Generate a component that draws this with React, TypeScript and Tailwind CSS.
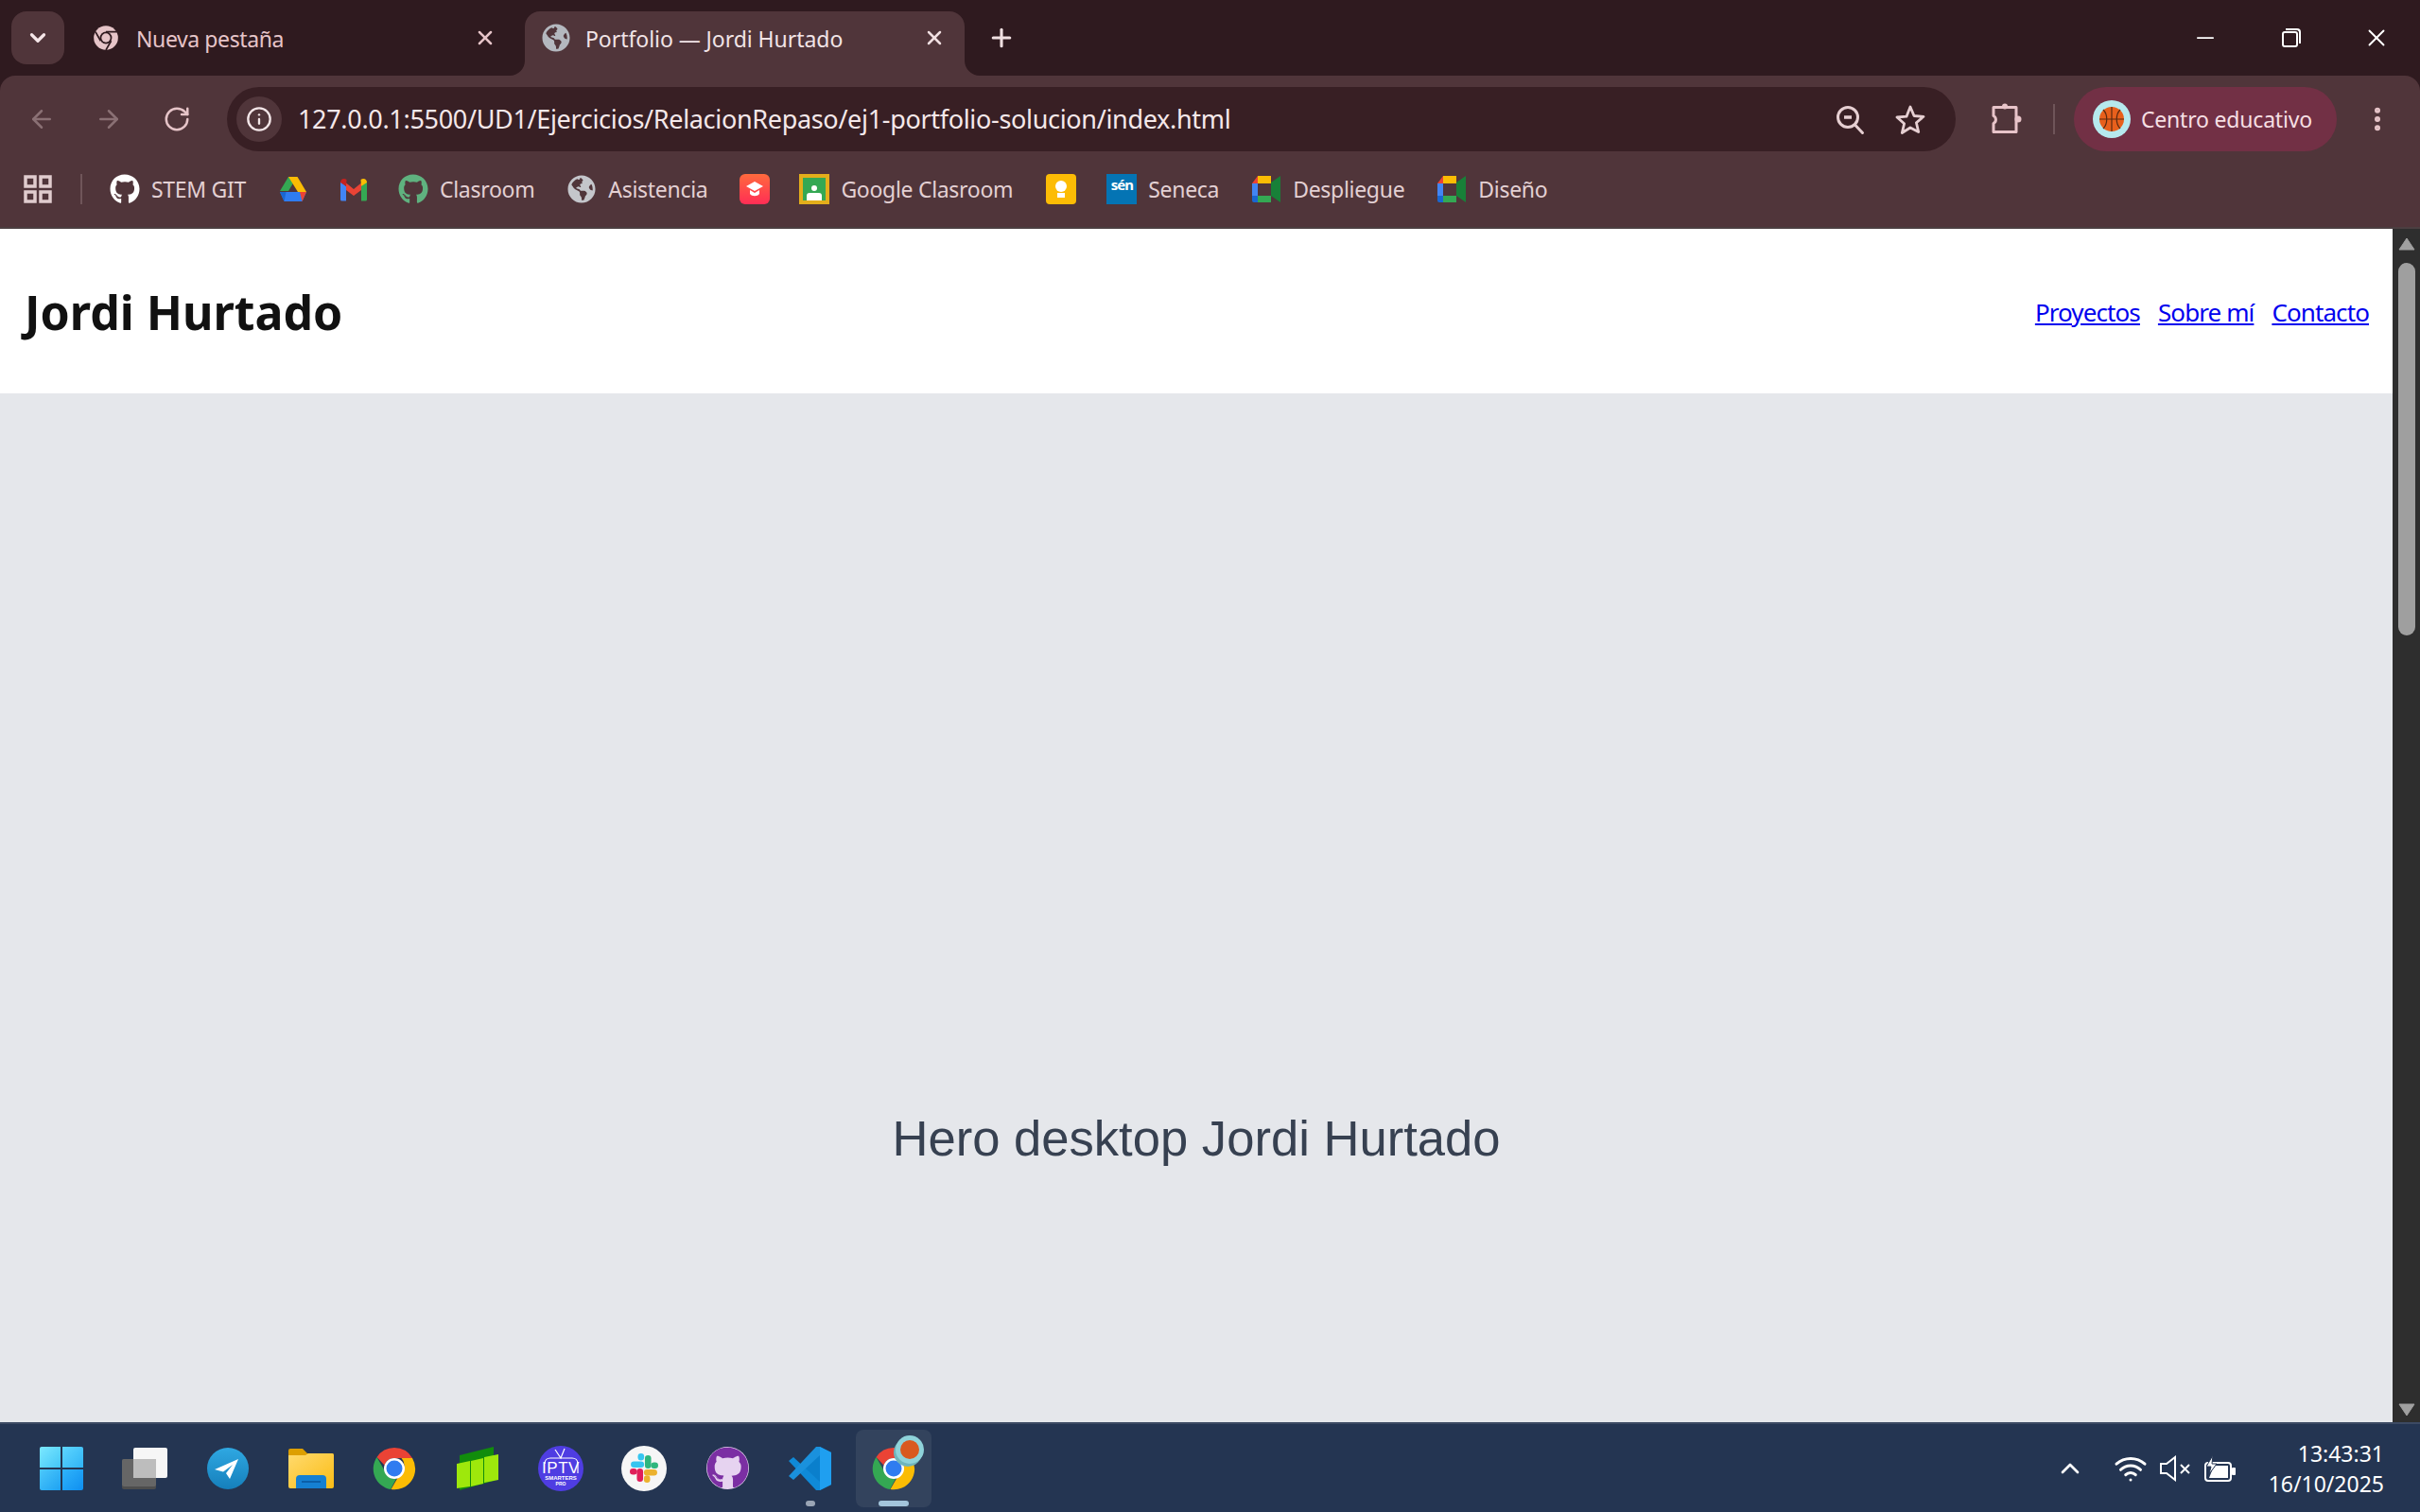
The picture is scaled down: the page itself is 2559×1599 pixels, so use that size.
import React, { type ReactNode } from "react";
import {
  ArrowLeft,
  ArrowRight,
  ChevronDown,
  ChevronUp,
  EllipsisVertical,
  Info,
  Minus,
  Plus,
  RotateCw,
  Wifi,
  X,
} from "lucide-react";
import { FaGithub, FaGlobeAmericas } from "react-icons/fa";

const SEGOE = "font-['Noto_Sans',sans-serif]";

function ChromeMono({ size = 28, color = "#e6c4c8" }: { size?: number; color?: string }) {
  return (
    <svg width={size} height={size} viewBox="0 0 48 48">
      <circle cx="24" cy="24" r="22" fill={color} />
      <circle cx="24" cy="24" r="11" fill="#2f1a1f" />
      <circle cx="24" cy="24" r="8" fill={color} />
      <path d="M24 13h20M14.5 29.5L5 13M33.5 29.5L24 46" stroke="#2f1a1f" strokeWidth="3" />
    </svg>
  );
}

function ChromeColor({ size = 48 }: { size?: number }) {
  return (
    <svg width={size} height={size} viewBox="0 0 48 48">
      <path d="M24 2a22 22 0 0 1 19 11H24a11 11 0 0 0-10.5 7.5L5.5 12A22 22 0 0 1 24 2z" fill="#ea4335" />
      <path d="M5.5 12l9.5 16.500a11 11 0 0 0 11 6.300L20 46A22 22 0 0 1 5.500 12z" fill="#34a853" />
      <path d="M43 13a22 22 0 0 1-22.500 33L30 29.500A11 11 0 0 0 31.500 13z" fill="#fbbc04" />
      <circle cx="24" cy="24" r="11" fill="#fff" />
      <circle cx="24" cy="24" r="8.500" fill="#2f7cf0" />
    </svg>
  );
}

function Drive() {
  return (
    <svg width="30" height="28" viewBox="0 0 30 28">
      <path d="M10 1h9L10 16H1z" fill="#34a853" />
      <path d="M10 1h9.500L29 17h-9z" fill="#fbbc04" />
      <path d="M1 17l4.500 10h19L29 17z" fill="#2f7cf0" />
      <path d="M1 17h6.500l-2 10z" fill="#1967d2" />
      <path d="M22 17h7l-4.500 10z" fill="#ea4335" />
    </svg>
  );
}

function Gmail() {
  return (
    <svg width="30" height="26" viewBox="0 0 30 26">
      <path d="M1 5v19a1.500 1.500 0 0 0 1.500 1.500H7V10z" fill="#4285f4" />
      <path d="M29 5v19a1.500 1.500 0 0 1-1.500 1.500H23V10z" fill="#34a853" />
      <path d="M7 6.500L15 13l8-6.500V14l-8 6-8-6z" fill="#ea4335" />
      <path d="M1 6c0-4 4-5 6.500-3L7 10z" fill="#c5221f" />
      <path d="M29 6c0-4-4-5-6.500-3L23 10z" fill="#fbbc04" />
    </svg>
  );
}

function ClassroomRed() {
  return (
    <div className="w-[32px] h-[32px] rounded-[6px] bg-[linear-gradient(#ff6a3d,#ff2d55)] flex items-center justify-center">
      <svg width="20" height="18" viewBox="0 0 20 18">
        <path d="M10 1l9 5-9 5-9-5z" fill="#fff" />
        <path d="M5 10v4c2 3 8 3 10 0v-4l-5 3z" fill="#fff" />
      </svg>
    </div>
  );
}

function GoogleClassroom() {
  return (
    <div className="w-[32px] h-[32px] bg-[#34a853] border-[4px] border-[#e3ae1b] flex flex-col items-center justify-end">
      <div className="w-[6px] h-[6px] rounded-full bg-white mb-[2px]" />
      <div className="w-[16px] h-[8px] bg-white rounded-t-[3px]" />
    </div>
  );
}

function Keep() {
  return (
    <div className="w-[32px] h-[32px] rounded-[4px] bg-[#fcbc05] flex flex-col items-center justify-center gap-[1px]">
      <div className="w-[12px] h-[12px] rounded-full bg-white" />
      <div className="w-[8px] h-[5px] bg-white" />
    </div>
  );
}

function Seneca() {
  return (
    <div className="w-[32px] h-[32px] bg-[#0474b4] flex justify-center pt-[1px]">
      <span className={`${SEGOE} text-white font-bold text-[15px] leading-[20px] tracking-[-1px]`}>sén</span>
    </div>
  );
}

function Meet() {
  return (
    <svg width="30" height="30" viewBox="0 0 30 30">
      <path d="M6 1h14v8H6z" fill="#fbbc04" />
      <path d="M6 1v8H0z" fill="#ea4335" />
      <path d="M0 9h6v13H0z" fill="#4285f4" />
      <path d="M0 22h6v7H2a2 2 0 0 1-2-2z" fill="#1967d2" />
      <path d="M6 22h14v7H6z" fill="#34a853" />
      <path d="M20 8v14l10 7V1z" fill="#188038" />
      <path d="M6 9h14v13H6z" fill="#50353a" />
    </svg>
  );
}

function WinLogo() {
  return (
    <div className="w-[46px] h-[46px] grid grid-cols-2 grid-rows-2 gap-[2px]">
      <div className="rounded-tl-[2px] bg-[linear-gradient(135deg,#7ce8ff,#43c6f7)]" />
      <div className="rounded-tr-[2px] bg-[linear-gradient(135deg,#5ed6ff,#30b4f5)]" />
      <div className="rounded-bl-[2px] bg-[linear-gradient(135deg,#4cc8fb,#1ea2f2)]" />
      <div className="rounded-br-[2px] bg-[linear-gradient(135deg,#2fb4fb,#0f8ff0)]" />
    </div>
  );
}

function TaskView() {
  return (
    <svg width="48" height="44" viewBox="0 0 48 44">
      <rect x="0" y="12" width="36" height="32" rx="2" fill="#4d4d4d" />
      <rect x="0" y="12" width="36" height="29" rx="2" fill="#666" />
      <rect x="12" y="0" width="36" height="32" rx="2" fill="#f6f6f6" />
      <rect x="12" y="12" width="24" height="20" fill="#bdbdbd" />
    </svg>
  );
}

function Telegram() {
  return (
    <svg width="44" height="44" viewBox="0 0 44 44">
      <defs>
        <linearGradient id="tg" x1="0" y1="0" x2="0" y2="1">
          <stop offset="0" stopColor="#2fa8e2" />
          <stop offset="1" stopColor="#157fbb" />
        </linearGradient>
      </defs>
      <circle cx="22" cy="22" r="22" fill="url(#tg)" />
      <path d="M33 12L8 23l9 2.500L27 18l-7 9 4 6z" fill="#fff" />
    </svg>
  );
}

function Folder() {
  return (
    <svg width="48" height="42" viewBox="0 0 48 42">
      <defs>
        <linearGradient id="fld" x1="0" y1="0" x2="1" y2="1">
          <stop offset="0" stopColor="#ffda6e" />
          <stop offset="1" stopColor="#fbbd16" />
        </linearGradient>
      </defs>
      <path d="M0 2a2 2 0 0 1 2-2h13l5 5h26a2 2 0 0 1 2 2v33H0z" fill="#dd9f00" />
      <path d="M0 7h18l3-2h25a2 2 0 0 1 2 2v33a2 2 0 0 1-2 2H2a2 2 0 0 1-2-2z" fill="url(#fld)" />
      <path d="M8 42V32a4 4 0 0 1 4-4h24a4 4 0 0 1 4 4v10z" fill="#1580d2" />
      <rect x="14" y="34" width="20" height="2" fill="#0b5fa8" />
    </svg>
  );
}

function GreenApp() {
  return (
    <svg width="44" height="46" viewBox="0 0 44 46">
      <path d="M3 9L39 0v36L3 46z" fill="#118c0c" />
      <path d="M0 18l14-3v27L0 44zM15 15l13-3v27l-13 3zM29 11l15-3v27l-15 3z" fill="#9ee80c" />
    </svg>
  );
}

function Iptv() {
  return (
    <div className="relative w-[48px] h-[48px] rounded-full bg-[#4f3de2] flex flex-col items-center justify-center">
      <svg width="48" height="48" viewBox="0 0 48 48" fill="none" stroke="#fff" strokeWidth="1.200" className="absolute inset-0">
        <path d="M18 4l6 9 4-10" />
        <path d="M7 19c0-4 3-6 6-6h23c3 0 6 2 6 6v10" />
      </svg>
      <span className="font-['Liberation_Sans',sans-serif] text-white text-[17px] leading-[15px] mt-[11px] tracking-[0.5px]">IPTV</span>
      <span className="font-['Liberation_Sans',sans-serif] text-white text-[6px] leading-[6px] font-bold">SMARTERS</span>
      <span className="font-['Liberation_Sans',sans-serif] text-white text-[5px] leading-[6px] font-bold">PRO</span>
    </div>
  );
}

function Slack() {
  return (
    <div className="w-[48px] h-[48px] rounded-full bg-[#f6f6f6] flex items-center justify-center">
      <svg width="34" height="34" viewBox="0 0 32 32" strokeWidth="6.200" strokeLinecap="round">
        <path d="M6 12h7" stroke="#36c5f0" />
        <path d="M13 4v1" stroke="#36c5f0" />
        <path d="M20 6v7" stroke="#2eb67d" />
        <path d="M27 13h-1" stroke="#2eb67d" />
        <path d="M26 20h-7" stroke="#ecb22e" />
        <path d="M19 27v-1" stroke="#ecb22e" />
        <path d="M12 26v-7" stroke="#e01e5a" />
        <path d="M5 19h1" stroke="#e01e5a" />
      </svg>
    </div>
  );
}

function GithubPurple() {
  return (
    <div className="w-[45px] h-[45px] rounded-full bg-[#e6d3f0] flex items-center justify-center overflow-hidden">
      <FaGithub size={45} color="#7b2fa3" />
    </div>
  );
}

function VsCode() {
  return (
    <svg width="48" height="48" viewBox="0 0 48 48">
      <path d="M34 1l12 6v34l-12 6-24-23z" fill="#0a7fcc" />
      <path d="M34 1l12 6v34l-12 6z" fill="#1f9ff0" />
      <path d="M1 16l5-4 28 26v9l-4 0z" fill="#0f8ad8" />
      <path d="M1 32l5 4L34 10V1l-4 0z" fill="#1a91dd" />
    </svg>
  );
}

function Basketball({ size }: { size: number }) {
  return (
    <svg width={size} height={size} viewBox="0 0 40 40">
      <circle cx="20" cy="20" r="20" fill="#b6e9ee" />
      <circle cx="20" cy="20" r="13" fill="#e8601c" />
      <path d="M7 20h26M20 7v26M11 10c5 5 5 15 0 20M29 10c-5 5-5 15 0 20" stroke="#5a2a10" strokeWidth="1.200" fill="none" />
    </svg>
  );
}

// little inverted corners at the foot of the active tab
function TabFoot({ side }: { side: "left" | "right" }) {
  return (
    <svg
      width="16"
      height="16"
      viewBox="0 0 16 16"
      className={side === "left" ? "absolute bottom-0 left-[-16px]" : "absolute bottom-0 right-[-16px]"}
    >
      <path d={side === "left" ? "M16 0v16H0A16 16 0 0 0 16 0z" : "M0 0v16h16A16 16 0 0 1 0 0z"} fill="#50353a" />
    </svg>
  );
}

function Bookmark({ icon, label, className }: { icon: ReactNode; label?: string; className?: string }) {
  return (
    <div className={`flex items-center gap-[12px] ${className ?? ""}`}>
      <div className="w-[32px] h-[32px] flex items-center justify-center shrink-0">{icon}</div>
      {label !== undefined && (
        <span className="text-[23px] leading-[32px] tracking-[-0.3px] text-[#e3d0d3] whitespace-nowrap">{label}</span>
      )}
    </div>
  );
}

function TaskIcon({ children, dot, active }: { children: ReactNode; dot?: boolean; active?: boolean }) {
  return (
    <div className="relative w-[88px] h-[88px] flex items-center justify-center">
      {active && <div className="absolute inset-x-[4px] inset-y-[3px] rounded-[8px] bg-[#33435d]" />}
      <div className="relative w-[50px] h-[50px] flex items-center justify-center">{children}</div>
      {dot && <div className="absolute bottom-[4px] left-[39px] w-[10px] h-[6px] rounded-full bg-[#9aa5b5]" />}
      {active && <div className="absolute bottom-[4px] left-[28px] w-[32px] h-[6px] rounded-full bg-[#a3c5dc]" />}
      {active && (
        <div className="absolute top-[9px] right-[12px] w-[30px] h-[30px] rounded-full bg-[#8fd3da] flex items-center justify-center shadow-[-2px_3px_0_#6fb5bd]">
          <div className="w-[20px] h-[20px] rounded-full bg-[#d9591f]" />
        </div>
      )}
    </div>
  );
}

export default function App(): React.ReactElement {
  return (
    <div className={`${SEGOE} w-[2559px] h-[1599px] flex flex-col overflow-hidden bg-[#2f1a1f]`}>
      {/* tab strip */}
      <div className="h-[80px] shrink-0 flex items-start pt-[12px] pl-[12px]">
        <div className="w-[56px] h-[56px] rounded-[16px] bg-[#50353a] flex items-center justify-center">
          <ChevronDown size={26} strokeWidth={3} color="#f5e6e8" />
        </div>
        <div className="w-[487px] h-[56px] flex items-center pl-[30px] pr-[30px]">
          <ChromeMono />
          <span className="ml-[18px] mt-[2px] text-[23px] tracking-[-0.4px] text-[#e6c4c8]">Nueva pestaña</span>
          <X size={24} strokeWidth={2.5} color="#e6c4c8" className="ml-auto" />
        </div>
        <div className="relative w-[465px] h-[68px] rounded-t-[16px] bg-[#50353a] flex items-start pt-[12px] pl-[18px] pr-[20px]">
          <TabFoot side="left" />
          <TabFoot side="right" />
          <div className="h-[32px] flex items-center">
            <FaGlobeAmericas size={30} color="#b4b8bf" />
          </div>
          <span className="ml-[16px] mt-[1px] text-[23px] leading-[32px] tracking-[-0.05px] text-[#f1e4e6]">Portfolio — Jordi Hurtado</span>
          <X size={24} strokeWidth={2.5} color="#f0dfe1" className="ml-auto mt-[4px]" />
        </div>
        <div className="ml-[24px] h-[56px] flex items-center">
          <Plus size={30} strokeWidth={2.5} color="#f0dfe1" />
        </div>
        <div className="ml-auto h-[56px] flex items-center pr-[31px]">
          <Minus size={28} strokeWidth={1.5} color="#fff" />
          <div className="relative w-[20px] h-[20px] ml-[67px] mr-[1px]">
            <div className="absolute left-[4px] top-0 w-[16px] h-[16px] border-t-2 border-r-2 rounded-tr-[4px] border-white" />
            <div className="absolute left-0 top-[3px] w-[17px] h-[17px] border-2 rounded-[3px] border-white" />
          </div>
          <X size={30} strokeWidth={1.5} color="#fff" className="ml-[64px]" />
        </div>
      </div>

      {/* toolbar + bookmarks */}
      <div className="h-[162px] shrink-0 bg-[#50353a] rounded-t-[16px] border-b-2 border-[#4c3f41] flex flex-col">
        <div className="h-[80px] shrink-0 pt-[12px] flex items-start">
          <div className="h-[68px] flex items-center pl-[29px] gap-[41px]">
            <ArrowLeft size={30} strokeWidth={2} color="#8a7074" />
            <ArrowRight size={30} strokeWidth={2} color="#8a7074" />
            <RotateCw size={30} strokeWidth={2} color="#e6c4c8" className="ml-[1px]" />
          </div>
          <div className="ml-[38px] w-[1828px] h-[68px] rounded-full bg-[#381f24] flex items-center pl-[10px] pr-[32px]">
            <div className="w-[48px] h-[48px] rounded-full bg-[#50353a] flex items-center justify-center">
              <Info size={28} strokeWidth={2} color="#f3e6e8" />
            </div>
            <span className="ml-[17px] text-[27px] tracking-[-0.32px] text-[#f5e8ea] whitespace-nowrap">
              127.0.0.1:5500/UD1/Ejercicios/RelacionRepaso/ej1-portfolio-solucion/index.html
            </span>
            <svg width="32" height="34" viewBox="0 0 32 34" fill="none" stroke="#e6cfd2" strokeWidth="3" strokeLinecap="round" className="ml-auto">
              <circle cx="14" cy="15" r="10.500" />
              <path d="M21.500 23l8 8.500" />
              <path d="M10 15h8" strokeWidth="3.500" strokeLinecap="butt" />
            </svg>
            <svg width="32" height="32" viewBox="0 0 32 32" fill="none" stroke="#e6cfd2" strokeWidth="2.800" strokeLinejoin="round" className="ml-[32px]">
              <path d="M16 3l4 9.500 10 .8-7.600 6.500 2.300 9.700L16 25l-8.700 5.500 2.300-9.700L2 14l10-.8z" />
            </svg>
          </div>
          <div className="ml-[36px] h-[68px] flex items-center">
            <svg width="34" height="34" viewBox="0 0 34 34" fill="none" stroke="#e8c4c9" strokeWidth="3" strokeLinejoin="round">
              <path d="M4 4.500h24v26H4v-9a4.500 4.500 0 0 0 0-8z" />
              <circle cx="16" cy="3.500" r="3" fill="#e8c4c9" stroke="none" />
              <circle cx="30" cy="17" r="3.500" fill="#e8c4c9" stroke="none" />
            </svg>
          </div>
          <div className="ml-[33px] mt-[18px] w-[2px] h-[32px] bg-[#6f5559]" />
          <div className="ml-[20px] w-[278px] h-[68px] rounded-full bg-[#723045] flex items-center pl-[20px]">
            <Basketball size={40} />
            <span className="ml-[11px] text-[23px] tracking-[-0.2px] text-[#f6dfe3] whitespace-nowrap">Centro educativo</span>
          </div>
          <div className="ml-[27px] h-[68px] flex items-center">
            <EllipsisVertical size={32} strokeWidth={2.5} color="#e6c4c8" />
          </div>
        </div>
        <div className="h-[80px] shrink-0 flex items-center pl-[24px]">
          <svg width="32" height="32" viewBox="0 0 32 32" fill="none" stroke="#e0ccce" strokeWidth="3.500">
            <rect x="3" y="3" width="10" height="10" />
            <rect x="19" y="3" width="10" height="10" />
            <rect x="3" y="19" width="10" height="10" />
            <rect x="19" y="19" width="10" height="10" />
          </svg>
          <div className="ml-[29px] w-[2px] h-[32px] bg-[#6f5559]" />
          <div className="ml-[29px] flex items-center gap-[34px]">
            <Bookmark icon={<FaGithub size={32} color="#fff" />} label="STEM GIT" />
            <Bookmark icon={<Drive />} />
            <Bookmark icon={<Gmail />} className="ml-[-2px]" />
            <Bookmark icon={<FaGithub size={32} color="#5fb27f" />} label="Clasroom" className="ml-[-3px]" />
            <Bookmark icon={<FaGlobeAmericas size={30} color="#c4c6cb" />} label="Asistencia" />
            <Bookmark icon={<ClassroomRed />} />
            <Bookmark icon={<GoogleClassroom />} label="Google Clasroom" className="ml-[-3px]" />
            <Bookmark icon={<Keep />} className="ml-[1px]" />
            <Bookmark icon={<Seneca />} label="Seneca" className="ml-[-2px]" />
            <Bookmark icon={<Meet />} label="Despliegue" />
            <Bookmark icon={<Meet />} label="Diseño" />
          </div>
        </div>
      </div>

      {/* page + scrollbar */}
      <div className="flex-1 min-h-0 flex">
        <div className="flex-1 min-w-0 overflow-hidden bg-white">
          <header className="h-[175px] flex items-center justify-between pt-[3px] px-[25px] border-b border-[#e5e7eb]">
            <h1 className="text-[50px] font-bold text-[#111] ml-[1px]">Jordi Hurtado</h1>
            <nav className="flex gap-[19px] text-[26px] tracking-[-0.9px]">
              <a href="#" className="text-[#0000ee] underline">Proyectos</a>
              <a href="#" className="text-[#0000ee] underline">Sobre mí</a>
              <a href="#" className="text-[#0000ee] underline">Contacto</a>
            </nav>
          </header>
          <div className="h-[1574px] bg-[#e5e7eb] flex items-center justify-center font-['Liberation_Sans',sans-serif] text-[52.6px] text-[#374151]">
            Hero desktop Jordi Hurtado
          </div>
        </div>
        <div className="w-[29px] shrink-0 bg-[#2e2e2e] flex flex-col items-center pt-[9px] pb-[6px]">
          <svg width="18" height="14" viewBox="0 0 18 14">
            <path d="M9 1l8 12H1z" fill="#a0a0a0" stroke="#a0a0a0" strokeLinejoin="round" />
          </svg>
          <div className="mt-[13px] w-[18px] h-[394px] rounded-full bg-[#9f9f9f]" />
          <svg width="18" height="14" viewBox="0 0 18 14" className="mt-auto">
            <path d="M1 1h16L9 13z" fill="#a0a0a0" stroke="#a0a0a0" strokeLinejoin="round" />
          </svg>
        </div>
      </div>

      {/* taskbar */}
      <div className="h-[95px] shrink-0 bg-[#243552] border-t-2 border-[#3c4a63] flex items-center pl-[21px]">
        <TaskIcon><WinLogo /></TaskIcon>
        <TaskIcon><TaskView /></TaskIcon>
        <TaskIcon><Telegram /></TaskIcon>
        <TaskIcon><Folder /></TaskIcon>
        <TaskIcon><ChromeColor /></TaskIcon>
        <TaskIcon><GreenApp /></TaskIcon>
        <TaskIcon><Iptv /></TaskIcon>
        <TaskIcon><Slack /></TaskIcon>
        <TaskIcon><GithubPurple /></TaskIcon>
        <TaskIcon dot><VsCode /></TaskIcon>
        <TaskIcon active><ChromeColor /></TaskIcon>
        <div className="ml-auto flex items-center pr-[38px]">
          <ChevronUp size={32} strokeWidth={2} color="#fff" />
          <Wifi size={36} strokeWidth={2} color="#fff" className="ml-[30px]" />
          <svg width="34" height="28" viewBox="0 0 34 28" fill="none" stroke="#fff" strokeWidth="2" className="ml-[12px]">
            <path d="M2 9v10h6l9 7V2L8 9z" />
            <path d="M23 10l9 9M32 10l-9 9" />
          </svg>
          <svg width="34" height="28" viewBox="0 0 34 28" className="ml-[14px]">
            <rect x="1" y="8" width="27" height="19" rx="3" fill="none" stroke="#fff" strokeWidth="2" />
            <path d="M10 11h15v13H5z" fill="#fff" />
            <rect x="29" y="13" width="4" height="8" rx="1" fill="#fff" />
            <path d="M9 0L2 12h5l-2 8 8-11H8z" fill="#fff" stroke="#243552" strokeWidth="1" />
          </svg>
          <div className="ml-[26px] w-[130px] flex flex-col items-end text-[23px] leading-[32px] text-white">
            <span>13:43:31</span>
            <span>16/10/2025</span>
          </div>
        </div>
      </div>
    </div>
  );
}
